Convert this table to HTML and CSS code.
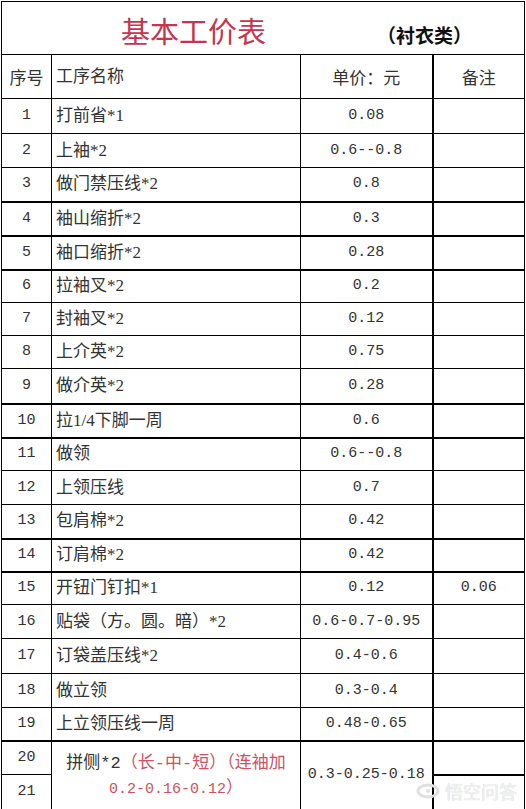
FILE: index.html
```html
<!DOCTYPE html>
<html lang="zh-CN">
<head>
<meta charset="utf-8">
<title>基本工价表</title>
<link rel="stylesheet" href="styles.css">
</head>
<body>
<div class="sheet">
<table class="grid">
<colgroup><col class="c1"><col class="c2"><col class="c3"><col class="c4"></colgroup>
<tr class="title-row"><td colspan="4"><div class="title"><span class="main">基本工价表</span><span class="sub">（衬衣类）</span></div></td></tr>
<tr class="head"><td class="idx cjk">序号</td><td class="name">工序名称</td><td class="price cjk">单价：元</td><td class="note cjk">备注</td></tr>
<tr class="h35"><td class="idx">1</td><td class="name">打前省*1</td><td class="price">0.08</td><td class="note"></td></tr>
<tr class="h34"><td class="idx">2</td><td class="name">上袖*2</td><td class="price">0.6--0.8</td><td class="note"></td></tr>
<tr class="h34 thick"><td class="idx">3</td><td class="name">做门禁压线*2</td><td class="price">0.8</td><td class="note"></td></tr>
<tr class="h34 thick"><td class="idx">4</td><td class="name">袖山缩折*2</td><td class="price">0.3</td><td class="note"></td></tr>
<tr class="h34 thick"><td class="idx">5</td><td class="name">袖口缩折*2</td><td class="price">0.28</td><td class="note"></td></tr>
<tr class="h33"><td class="idx">6</td><td class="name">拉袖叉*2</td><td class="price">0.2</td><td class="note"></td></tr>
<tr class="h33"><td class="idx">7</td><td class="name">封袖叉*2</td><td class="price">0.12</td><td class="note"></td></tr>
<tr class="h33"><td class="idx">8</td><td class="name">上介英*2</td><td class="price">0.75</td><td class="note"></td></tr>
<tr class="h35 thick"><td class="idx">9</td><td class="name">做介英*2</td><td class="price">0.28</td><td class="note"></td></tr>
<tr class="h34 thick"><td class="idx">10</td><td class="name">拉1/4下脚一周</td><td class="price">0.6</td><td class="note"></td></tr>
<tr class="h33"><td class="idx">11</td><td class="name">做领</td><td class="price">0.6--0.8</td><td class="note"></td></tr>
<tr class="h34"><td class="idx">12</td><td class="name">上领压线</td><td class="price">0.7</td><td class="note"></td></tr>
<tr class="h34 thick"><td class="idx">13</td><td class="name">包肩棉*2</td><td class="price">0.42</td><td class="note"></td></tr>
<tr class="h33 thick"><td class="idx">14</td><td class="name">订肩棉*2</td><td class="price">0.42</td><td class="note"></td></tr>
<tr class="h33"><td class="idx">15</td><td class="name">开钮门钉扣*1</td><td class="price">0.12</td><td class="note">0.06</td></tr>
<tr class="h34"><td class="idx">16</td><td class="name">贴袋（方。圆。暗）*2</td><td class="price">0.6-0.7-0.95</td><td class="note"></td></tr>
<tr class="h35"><td class="idx">17</td><td class="name">订袋盖压线*2</td><td class="price">0.4-0.6</td><td class="note"></td></tr>
<tr class="h34"><td class="idx">18</td><td class="name">做立领</td><td class="price">0.3-0.4</td><td class="note"></td></tr>
<tr class="h33 thick"><td class="idx">19</td><td class="name">上立领压线一周</td><td class="price">0.48-0.65</td><td class="note"></td></tr>
<tr class="h34"><td class="idx">20</td><td class="name merged" rowspan="2"><span>拼侧*2</span><span class="red">（长-中-短）（连袖加<br><span class="num">0.2-0.16-0.12</span>）</span></td><td class="price" rowspan="2">0.3-0.25-0.18</td><td class="note thick-note"></td></tr>
<tr class="h35 thick"><td class="idx">21</td><td class="note"></td></tr>
</table>
<div class="watermark"><svg class="wm-logo" width="24" height="16" viewBox="0 0 24 16"><ellipse cx="12" cy="8" rx="10" ry="6" fill="none" stroke="#e0e0e0" stroke-width="3"/><circle cx="12" cy="8" r="2" fill="#e0e0e0"/></svg><span class="wm-text">悟空问答</span></div>
</div>
</body>
</html>
```
FILE: styles.css
```css
html, body {
  margin: 0;
  padding: 0;
  background: #fff;
}

.sheet {
  position: relative;
  width: 526px;
  height: 809px;
  padding: 1px 0 0 1px;
  box-sizing: border-box;
  overflow: hidden;
}

.grid {
  border-collapse: collapse;
  table-layout: fixed;
  width: 523px;
}

.c1 { width: 50px; }
.c2 { width: 249px; }
.c3 { width: 132px; }
.c4 { width: 92px; }

.grid td {
  border: 1px solid #000;
  padding: 0;
  color: #333;
  font-family: "Liberation Serif", "Noto Sans CJK SC", serif;
  font-size: 17px;
  line-height: 20px;
  vertical-align: middle;
  overflow: hidden;
  white-space: nowrap;
}

.title-row { height: 53px; }
.head { height: 44px; }
.h33 { height: 33px; }
.h34 { height: 34px; }
.h35 { height: 35px; }

.grid tr.thick td { border-bottom-width: 2px; }
.grid td.thick-note { border-bottom-width: 2px; }

.title {
  display: flex;
  align-items: baseline;
  padding-left: 119px;
  padding-top: 3px;
  font-family: "Noto Sans CJK SC", sans-serif;
}

.main {
  color: #c4364d;
  font-size: 29px;
  line-height: 36px;
}

.sub {
  margin-left: 111px;
  font-size: 19px;
  font-weight: bold;
  color: #111;
}

.grid td.idx {
  text-align: center;
  font-family: "Liberation Mono", "Noto Sans CJK SC", monospace;
  font-size: 15px;
}

.grid td.name {
  padding-left: 4px;
  font-family: "Liberation Serif", "Noto Sans CJK SC", serif;
}

.grid td.price {
  text-align: center;
  font-family: "Liberation Mono", "Noto Sans CJK SC", monospace;
  font-size: 15px;
}

.grid td.note {
  text-align: center;
  border-left-width: 2px;
  font-family: "Liberation Mono", "Noto Sans CJK SC", monospace;
  font-size: 15px;
}

.grid td.cjk {
  font-family: "Noto Sans CJK SC", sans-serif;
  font-size: 17px;
}

.grid td.merged {
  padding-left: 0;
  padding-top: 2px;
  text-align: center;
  line-height: 25px;
  white-space: normal;
  font-family: "Liberation Mono", "Noto Sans CJK SC", monospace;
}

.red {
  color: #d0505f;
}

.num {
  font-size: 15px;
}

.watermark {
  position: absolute;
  left: 416px;
  top: 780px;
  display: flex;
  align-items: center;
  gap: 5px;
}

.wm-text {
  font-family: "Noto Sans CJK SC", sans-serif;
  font-size: 18px;
  line-height: 22px;
  color: #f0f0f0;
  text-shadow: 0 0 1px #cfcfcf;
}
```
